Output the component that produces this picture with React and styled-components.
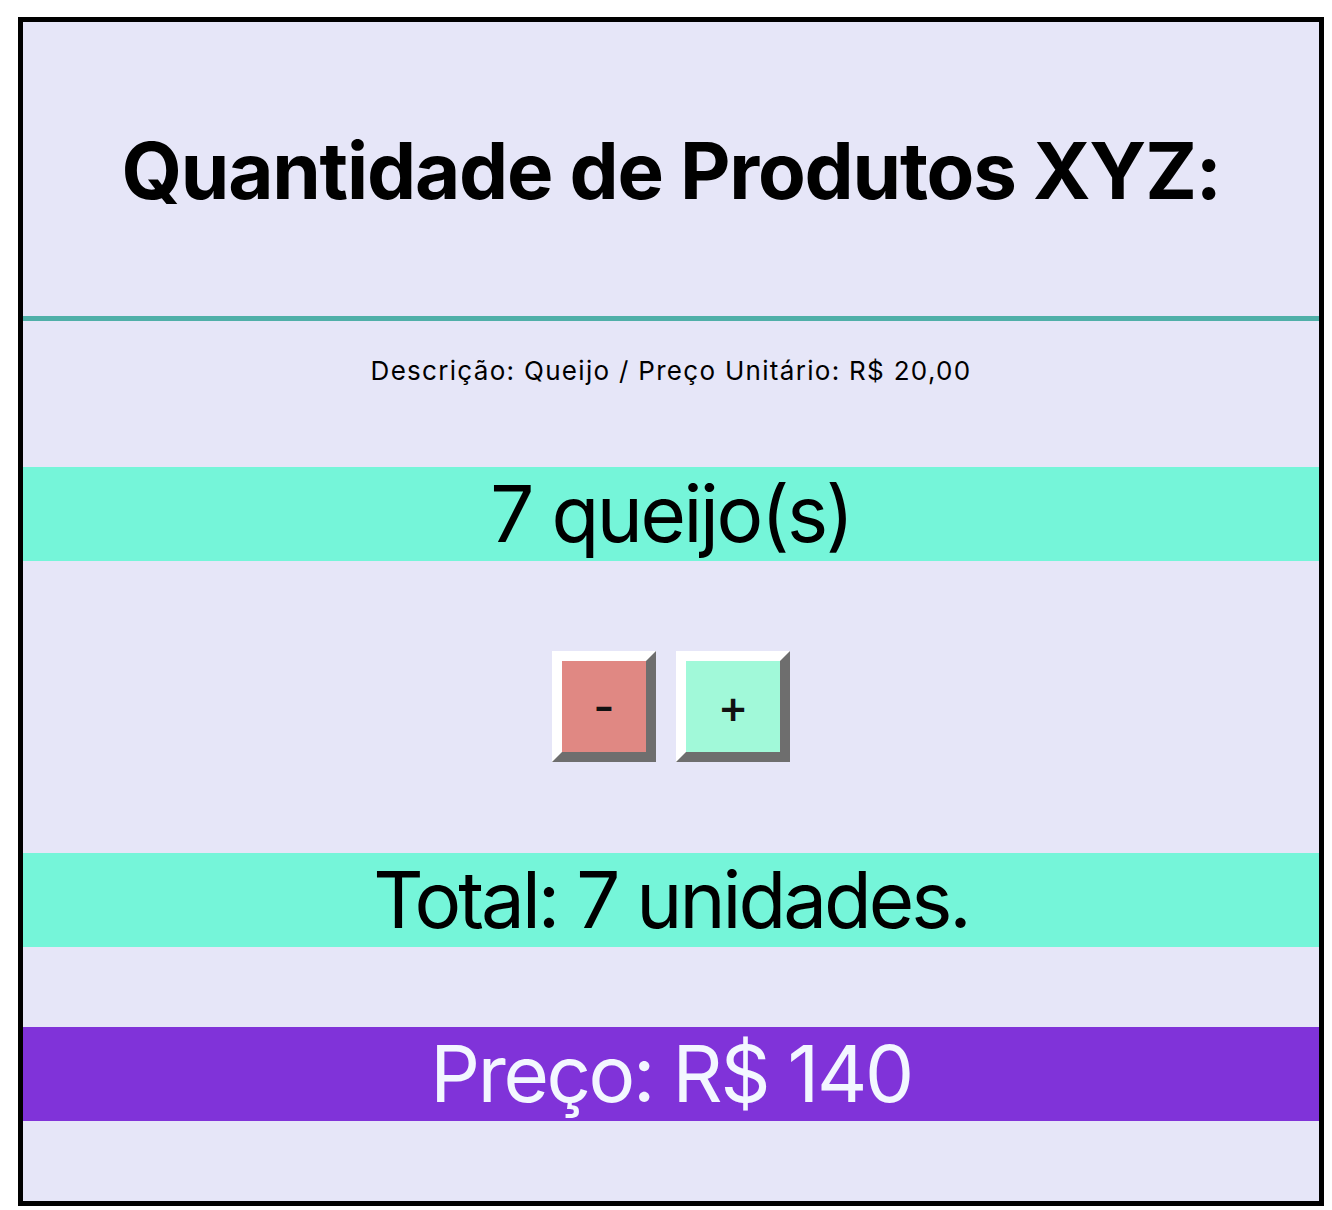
import React, { useState } from "react";
import styled, { createGlobalStyle } from "styled-components";

const Global = createGlobalStyle`
  html, body { margin: 0; padding: 0; background: #ffffff; }
  body { font-family: Inter, "Noto Sans", sans-serif; }
`;

const Frame = styled.main`
  margin: 17px 8px 0 18px;
  border: 5px solid #000;
  background: #e6e6f8;
  display: flex;
  flex-direction: column;
  align-items: stretch;
  padding-bottom: 80px;
`;

const Title = styled.h1`
  margin: 0;
  padding: 102px 0 98px;
  font-size: 78px;
  line-height: 94px;
  font-weight: 700;
  text-align: center;
  color: #000;
  letter-spacing: -1.2px;
`;

const Divider = styled.hr`
  margin: 0;
  border: none;
  height: 5px;
  background: #4fafa8;
`;

const Description = styled.p`
  margin: 36px 0 83px;
  font-size: 26px;
  line-height: 27px;
  letter-spacing: 1.3px;
  text-align: center;
  color: #000;
`;

const Band = styled.div`
  background: ${(p) => p.$bg};
  color: ${(p) => p.$fg};
  font-size: 78px;
  line-height: 94px;
  letter-spacing: ${(p) => p.$track || -2.4}px;
  text-align: center;
  margin-bottom: ${(p) => p.$after || 0}px;
`;

const Controls = styled.div`
  display: flex;
  justify-content: center;
  gap: 20px;
  margin: 90px 0 91px;
`;

const StepButton = styled.button`
  font-family: Inter, "Noto Sans", sans-serif;
  font-size: 46px;
  font-weight: 500;
  line-height: 49px;
  width: ${(p) => p.$w}px;
  padding: 21px 0;
  border-width: 10px;
  border-style: solid;
  border-color: #ffffff #6e6e6e #6e6e6e #ffffff;
  background: ${(p) => p.$bg};
  color: #111;
  cursor: pointer;
`;

export default function App() {
  const [count, setCount] = useState(7);
  const price = 20;
  return (
    <>
      <Global />
      <Frame>
        <Title>Quantidade de Produtos XYZ:</Title>
        <Divider />
        <Description>Descrição: Queijo / Preço Unitário: R$ 20,00</Description>
        <Band $bg="#75f5d9" $fg="#000">{count} queijo(s)</Band>
        <Controls>
          <StepButton $w={104} $bg="#e08883" onClick={() => setCount((c) => Math.max(0, c - 1))}>-</StepButton>
          <StepButton $w={114} $bg="#a1f9d9" onClick={() => setCount((c) => c + 1)}>+</StepButton>
        </Controls>
        <Band $bg="#75f5d9" $fg="#000" $after={80} $track={-3}>Total: {count} unidades.</Band>
        <Band $bg="#8033d9" $fg="#f3f7ff">Preço: R$ {count * price}</Band>
      </Frame>
    </>
  );
}
